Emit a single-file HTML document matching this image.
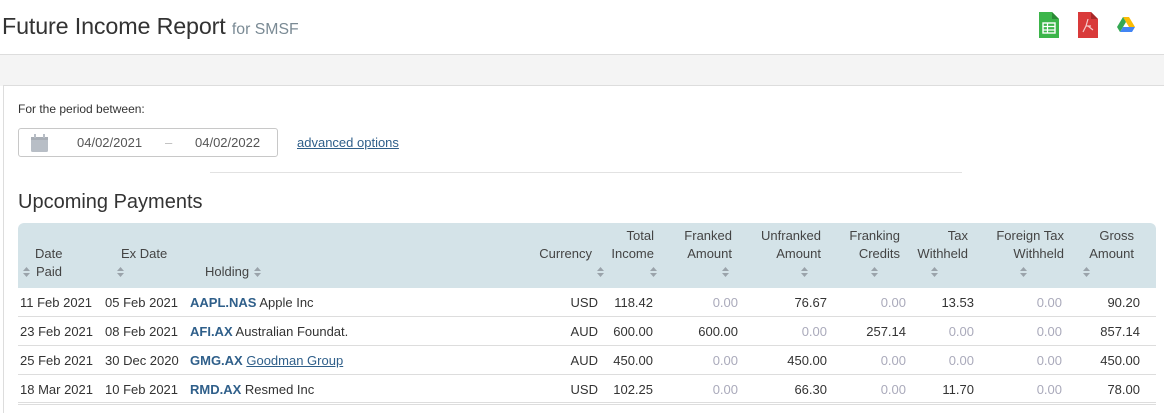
<!DOCTYPE html>
<html style="overflow:hidden;height:413px"><head><meta charset="utf-8"><style>
*{margin:0;padding:0;box-sizing:border-box}
body{width:1164px;height:413px;overflow:hidden;background:#fff;font-family:"Liberation Sans",Arial,sans-serif;color:#333;position:relative;font-size:13px}
.abs{position:absolute}
h1{position:absolute;left:2px;top:13px;font-weight:normal;font-size:23.3px;color:#333;white-space:nowrap;letter-spacing:-0.15px}
h1 small{font-size:15.8px;color:#7a8a94;letter-spacing:0}
.band{position:absolute;left:0;top:54px;width:1164px;height:32px;background:#f4f4f4;border-top:1px solid #ddd}
.panel{position:absolute;left:3px;top:85px;width:1170px;height:340px;border:1px solid #ddd;border-bottom:none;background:#fff}
.date{position:absolute;left:18px;top:128px;width:260px;height:29px;border:1px solid #c8c8c8;border-radius:3px;font-size:13px;color:#555}
.th{position:absolute;left:18px;top:223px;width:1138px;height:65px;background:#d4e3e8;border-radius:6px 6px 0 0}
.h{position:absolute;font-size:13px;color:#444;line-height:18px;white-space:nowrap}
.r{text-align:right}
.row{position:absolute;left:18px;width:1138px;height:29px;border-bottom:1px solid #ddd}
.c{position:absolute;top:7px;font-size:13px;color:#333;white-space:nowrap}
.g{color:#aab}
.tk{color:#2f5f8a;font-weight:bold}
svg.s{position:absolute}
</style></head><body>
<h1>Future Income Report <small>for SMSF</small></h1>
<svg class="abs" style="left:1039px;top:12px" width="20" height="26" viewBox="0 0 20 26"><path d="M0 0H13L20 7V26H0Z" fill="#3cb54a"/><path d="M13 0L20 7H13Z" fill="#2a8a36"/><rect x="4" y="11" width="12" height="10" fill="none" stroke="#fff" stroke-width="1.4"/><path d="M4 14.5H16M4 18H16M8.5 11V21" stroke="#fff" stroke-width="1.2"/></svg>
<svg class="abs" style="left:1078px;top:12px" width="20" height="26" viewBox="0 0 20 26"><path d="M0 0H13L20 7V26H0Z" fill="#d93a3a"/><path d="M13 0L20 7H13Z" fill="#a82828"/><path d="M10 7L8 14L5 20M10 14L15 18M8 14H13" stroke="#f4c8c8" stroke-width="1.2" fill="none"/></svg>
<svg class="abs" style="left:1117px;top:17px" width="18" height="15" viewBox="0 0 18 15"><path d="M6 0H12L18 10H12Z" fill="#fbbc04"/><path d="M6 0L0 10L3 15L9 5Z" fill="#34a853"/><path d="M3 15H15L18 10H6Z" fill="#4285f4"/></svg>
<div class="band"></div>
<div class="panel"></div>
<div class="abs" style="left:18px;top:102px;font-size:12px;color:#333">For the period between:</div>
<div class="date">
 <svg class="abs" style="left:12px;top:5px" width="17" height="18" viewBox="0 0 17 18"><rect x="0" y="3" width="17" height="15" rx="1.5" fill="#b8bec6"/><rect x="0" y="3" width="17" height="3" fill="#a8aeb6"/><rect x="3" y="0" width="2" height="4" fill="#b8bec6"/><rect x="12" y="0" width="2" height="4" fill="#b8bec6"/></svg>
 <div class="abs" style="left:58px;top:6px">04/02/2021</div>
 <div class="abs" style="left:146px;top:6px;color:#bbb">–</div>
 <div class="abs" style="left:176px;top:6px">04/02/2022</div>
</div>
<div class="abs" style="left:297px;top:135px;color:#2f5f8a;text-decoration:underline">advanced options</div>
<div class="abs" style="left:210px;top:172px;width:752px;height:1px;background:#e2e2e2"></div>
<div class="abs" style="left:18px;top:191px;font-size:20px;color:#333">Upcoming Payments</div>
<div class="th"></div>
<div class="h" style="left:35px;top:245px">Date</div>
<div class="h" style="left:36px;top:263px">Paid</div>
<div class="h" style="left:121px;top:245px">Ex Date</div>
<div class="h" style="left:205px;top:263px">Holding</div>
<div class="h r" style="right:572px;top:245px">Currency</div>
<div class="h r" style="right:510px;top:227px">Total<br>Income</div>
<div class="h r" style="right:432px;top:227px">Franked<br>Amount</div>
<div class="h r" style="right:343px;top:227px">Unfranked<br>Amount</div>
<div class="h r" style="right:264px;top:227px">Franking<br>Credits</div>
<div class="h r" style="right:196px;top:227px">Tax<br>Withheld</div>
<div class="h r" style="right:100px;top:227px">Foreign Tax<br>Withheld</div>
<div class="h r" style="right:30px;top:227px">Gross<br>Amount</div>
<svg width="0" height="0" style="position:absolute"><defs><g id="ar"><path d="M0 4L3.5 0L7 4Z M0 6L3.5 10L7 6Z" fill="#9aa3aa"/></g></defs></svg>
<svg class="s" style="left:23px;top:267px" width="7" height="10"><use href="#ar"/></svg>
<svg class="s" style="left:117px;top:267px" width="7" height="10"><use href="#ar"/></svg>
<svg class="s" style="left:254px;top:267px" width="7" height="10"><use href="#ar"/></svg>
<svg class="s" style="left:597px;top:267px" width="7" height="10"><use href="#ar"/></svg>
<svg class="s" style="left:650px;top:267px" width="7" height="10"><use href="#ar"/></svg>
<svg class="s" style="left:722px;top:267px" width="7" height="10"><use href="#ar"/></svg>
<svg class="s" style="left:801px;top:267px" width="7" height="10"><use href="#ar"/></svg>
<svg class="s" style="left:871px;top:267px" width="7" height="10"><use href="#ar"/></svg>
<svg class="s" style="left:931px;top:267px" width="7" height="10"><use href="#ar"/></svg>
<svg class="s" style="left:1020px;top:267px" width="7" height="10"><use href="#ar"/></svg>
<svg class="s" style="left:1083px;top:267px" width="7" height="10"><use href="#ar"/></svg>

<div class="row" style="top:288px">
<div class="c" style="left:2px">11 Feb 2021</div><div class="c" style="left:87px">05 Feb 2021</div><div class="c" style="left:172px"><span class="tk">AAPL.NAS</span> Apple Inc</div>
<div class="c" style="right:558px">USD</div><div class="c" style="right:503px">118.42</div><div class="c g" style="right:418px">0.00</div><div class="c" style="right:329px">76.67</div><div class="c g" style="right:250px">0.00</div><div class="c" style="right:182px">13.53</div><div class="c g" style="right:94px">0.00</div><div class="c" style="right:16px">90.20</div></div>
<div class="row" style="top:317px">
<div class="c" style="left:2px">23 Feb 2021</div><div class="c" style="left:87px">08 Feb 2021</div><div class="c" style="left:172px"><span class="tk">AFI.AX</span> Australian Foundat.</div>
<div class="c" style="right:558px">AUD</div><div class="c" style="right:503px">600.00</div><div class="c" style="right:418px">600.00</div><div class="c g" style="right:329px">0.00</div><div class="c" style="right:250px">257.14</div><div class="c g" style="right:182px">0.00</div><div class="c g" style="right:94px">0.00</div><div class="c" style="right:16px">857.14</div></div>
<div class="row" style="top:346px">
<div class="c" style="left:2px">25 Feb 2021</div><div class="c" style="left:87px">30 Dec 2020</div><div class="c" style="left:172px"><span class="tk">GMG.AX</span> <span style="color:#2f5f8a;text-decoration:underline">Goodman Group</span></div>
<div class="c" style="right:558px">AUD</div><div class="c" style="right:503px">450.00</div><div class="c g" style="right:418px">0.00</div><div class="c" style="right:329px">450.00</div><div class="c g" style="right:250px">0.00</div><div class="c g" style="right:182px">0.00</div><div class="c g" style="right:94px">0.00</div><div class="c" style="right:16px">450.00</div></div>
<div class="row" style="top:375px;border-bottom:3px double #ddd;height:30px">
<div class="c" style="left:2px">18 Mar 2021</div><div class="c" style="left:87px">10 Feb 2021</div><div class="c" style="left:172px"><span class="tk">RMD.AX</span> Resmed Inc</div>
<div class="c" style="right:558px">USD</div><div class="c" style="right:503px">102.25</div><div class="c g" style="right:418px">0.00</div><div class="c" style="right:329px">66.30</div><div class="c g" style="right:250px">0.00</div><div class="c" style="right:182px">11.70</div><div class="c g" style="right:94px">0.00</div><div class="c" style="right:16px">78.00</div></div>
</body></html>
